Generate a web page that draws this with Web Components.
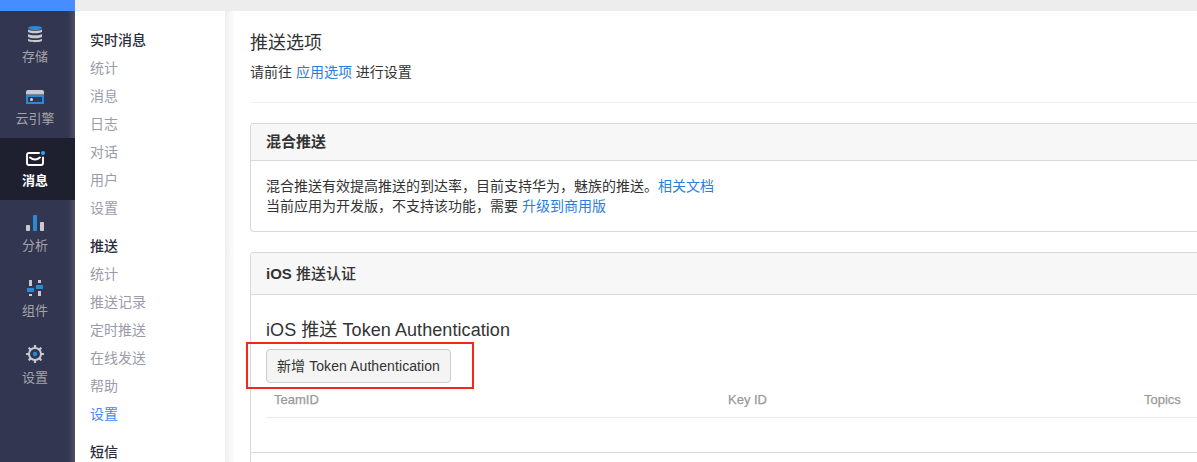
<!DOCTYPE html>
<html lang="zh-CN">
<head>
<meta charset="utf-8">
<title>推送选项</title>
<style>
html,body{margin:0;height:100%;overflow:hidden;background:#fff}
body{font-family:"Liberation Sans","Noto Sans CJK SC",sans-serif;font-size:14px;line-height:20px;color:#333}
</style>
</head>
<body>
<push-console></push-console>
<script>
const define = (name, html, setup) => {
  const tpl = document.createElement('template');
  tpl.innerHTML = html;
  customElements.define(name, class extends HTMLElement {
    constructor() {
      super();
      this.attachShadow({mode: 'open'}).append(tpl.content.cloneNode(true));
    }
    connectedCallback() { if (setup) setup(this, this.shadowRoot); }
  });
};

const teeth = [0,45,90,135,180,225,270,315].map(a => `<rect x="7.9" y="0" width="2.2" height="4" rx=".5" fill="#c8c9d1" transform="rotate(${a} 9 9)"/>`).join('');
const icons = {
  storage: '<path d="M2 4.500v2c0 2.400 14 2.400 14 0v-2c-1.500 1.700-12.500 1.700-14 0zM2 9v2.500c0 2.400 14 2.400 14 0V9c-1.500 1.800-12.500 1.800-14 0zM2 13.700v1.800c0 2.200 14 2.200 14 0v-1.800c-1.500 1.800-12.500 1.800-14 0z" fill="#c8c9d1"/><ellipse cx="9" cy="3" rx="7" ry="2.100" fill="#2d88d3"/>',
  engine: '<path d="M0 6.500V4q0-2 2-2h14q2 0 2 2v2.500z" fill="#c8c9d1"/><path d="M1 8h16v7H1z" fill="none" stroke="#2d88d3" stroke-width="2"/><circle cx="5.500" cy="11.500" r="1.500" fill="#d5d6dd"/>',
  message: '<path d="M13 3H3Q1 3 1 5v8q0 2 2 2h12q2 0 2-2V7.500M4 7.500q5 4 10 0" fill="none" stroke="#fff" stroke-width="1.900" stroke-linecap="round"/><circle cx="17" cy="3" r="2.100" fill="#34a0f8"/>',
  stats: '<rect y="11" width="4" height="6" rx=".8" fill="#c8c9d1"/><rect x="7" y="1" width="4" height="16" rx=".8" fill="#2d88d3"/><rect x="14" y="8" width="4" height="9" rx=".8" fill="#c8c9d1"/>',
  parts: '<path d="M3 1h3v6H3zM3 15h3v2H3zM12 1h3v3h-3zM12 12h3v5h-3z" fill="#c8c9d1"/><path d="M1 9h7v4H1zM10 6h7v4h-7z" fill="#2d88d3"/>',
  gear: teeth + '<circle cx="9" cy="9" r="6" fill="#333650" stroke="#c8c9d1" stroke-width="2"/><circle cx="9" cy="9" r="2.200" fill="#2d88d3"/>'
};

define('nav-item', `<style>
:host{display:flex;flex-direction:column;justify-content:flex-end;align-items:center;height:62px;width:75px;padding:0 5px 9px 0;box-sizing:border-box;color:#a3a4a8;font-size:13px;line-height:20px}
:host([tall]){height:65px}
:host([taller]){height:67px}
:host([active]){background:#1f202f;color:#fff;font-weight:700}
svg{display:block;width:18px;height:18px;overflow:visible;margin-bottom:4px}
:host([icon=engine]) svg,:host([icon=message]) svg{margin-bottom:3px}
:host([taller]) svg{margin-bottom:5px}
</style><svg viewBox="0 0 18 18"></svg><span><slot></slot></span>`,
(host, root) => { root.querySelector('svg').innerHTML = icons[host.getAttribute('icon')]; });

define('main-nav', `<style>
:host{display:block;width:75px;flex:none;padding-top:3px;box-sizing:border-box;background:linear-gradient(90deg,transparent 68px,rgba(255,255,255,.13)),#333650}
</style>
<nav-item icon="storage">存储</nav-item>
<nav-item icon="engine">云引擎</nav-item>
<nav-item icon="message" active>消息</nav-item>
<nav-item icon="stats" tall>分析</nav-item>
<nav-item icon="parts" tall>组件</nav-item>
<nav-item icon="gear" taller>设置</nav-item>`);

define('menu-entry', `<style>
:host{display:block;height:28px;line-height:28px;color:#9a9cab}
:host([current]){color:#4a82fb}
</style><slot></slot>`);

define('menu-group', `<style>
:host{display:block;margin-bottom:10px}
h3{margin:0;height:28px;font-size:14px;line-height:28px;font-weight:500;color:#292c3c}
</style><h3></h3><slot></slot>`,
(host, root) => { root.querySelector('h3').textContent = host.getAttribute('heading'); });

define('side-menu', `<style>
:host{display:block;width:150px;flex:none;box-sizing:border-box;padding:15px 0 0 15px;background:#fff;overflow:hidden}
</style>
<menu-group heading="实时消息"><menu-entry>统计</menu-entry><menu-entry>消息</menu-entry><menu-entry>日志</menu-entry><menu-entry>对话</menu-entry><menu-entry>用户</menu-entry><menu-entry>设置</menu-entry></menu-group>
<menu-group heading="推送"><menu-entry>统计</menu-entry><menu-entry>推送记录</menu-entry><menu-entry>定时推送</menu-entry><menu-entry>在线发送</menu-entry><menu-entry>帮助</menu-entry><menu-entry current>设置</menu-entry></menu-group>
<menu-group heading="短信"></menu-group>`);

define('text-link', `<style>:host{color:#2b7de0}</style><slot></slot>`);

define('option-panel', `<style>
:host{display:block;border:1px solid #d9d9d9;border-right:0;border-radius:4px 0 0 4px;margin-bottom:20px}
header{box-sizing:border-box;height:var(--head,37px);line-height:calc(var(--head,37px) - 1px);padding-left:15px;background:#f7f7f7;border-bottom:1px solid #d9d9d9;border-radius:3px 0 0 0;font-size:15px;font-weight:700}
</style><header><slot name="title"></slot></header><slot></slot>`);

define('plain-button', `<style>
:host{display:flex;position:relative;align-items:center;justify-content:center;box-sizing:border-box;width:185px;height:34px;border:1px solid #ccc;border-radius:4px;background:#f4f4f4;white-space:nowrap;letter-spacing:.08px}
.mark{position:absolute;left:-21px;top:-8px;width:224px;height:43px;border:2px solid #f3271c}
</style><slot></slot><span class="mark"></span>`);

define('token-table', `<style>
:host{display:grid;grid-template-columns:454px 416px 1fr;height:35px;box-sizing:border-box;border-bottom:1px solid #eaeaea;color:#999;font-size:13px;line-height:34px;-webkit-text-stroke:.25px #999}
span{padding-left:8px}
</style><span>TeamID</span><span>Key ID</span><span>Topics</span>`);

define('push-settings', `<style>
:host{display:block;flex:1;min-width:0;padding:20px 0 0 25px;background:linear-gradient(90deg,#eee,#fff 10px)}
h1{margin:0;font-size:18px;line-height:24px;font-weight:400}
.lead{margin:7px 0 0;height:40px}
hr{margin:0 0 20px;border:0;height:1px;background:#eee}
.copy{padding:15px 15px 0;height:70px;box-sizing:border-box}
.auth{--head:42px;height:260px}
.auth i{font-style:normal;font-weight:500}
.body{padding:22px 0 0 15px}
h2{margin:0;font-size:18px;line-height:26px;height:32px;font-weight:400;letter-spacing:.07px}
.end{height:34px;border-bottom:1px solid #d9d9d9;margin-left:-15px}
</style>
<h1>推送选项</h1>
<p class="lead">请前往 <text-link>应用选项</text-link> 进行设置</p>
<hr>
<option-panel><span slot="title">混合推送</span><div class="copy">混合推送有效提高推送的到达率，目前支持华为，魅族的推送。<text-link>相关文档</text-link><br>当前应用为开发版，不支持该功能，需要 <text-link>升级到商用版</text-link></div></option-panel>
<option-panel class="auth"><span slot="title">iOS <i>推送认证</i></span><div class="body"><h2>iOS 推送 Token Authentication</h2><plain-button>新增 Token Authentication</plain-button><token-table></token-table><div class="end"></div></div></option-panel>`);

define('push-console', `<style>
:host{display:flex;flex-direction:column;width:100%;height:100vh;overflow:hidden}
.top{height:11px;flex:none;background:linear-gradient(90deg,#468dff 75px,#ededed 75px)}
.content{display:flex;flex:1;min-height:0}
</style><div class="top"></div><div class="content"><main-nav></main-nav><side-menu></side-menu><push-settings></push-settings></div>`);
</script>
</body>
</html>
